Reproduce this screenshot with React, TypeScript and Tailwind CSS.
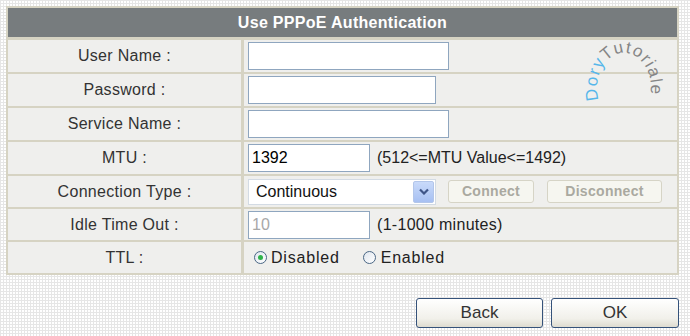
import clsx from "clsx";
import React, { FunctionComponent, ReactNode } from "react";

const font = "font-['Liberation_Sans',Arial,sans-serif]";

type RowProps = { label: string; h: string; children: ReactNode };

const Row: FunctionComponent<RowProps> = ({ label, h, children }) => {
  return (
    <div className={clsx("flex gap-[3px]", h)}>
      <div className="w-[233px] flex items-center justify-center bg-[#efefed] text-[16px] text-[#333] tracking-[0.3px]">
        {label}
      </div>
      <div className="flex-1 flex items-center pl-[4px] bg-[#efefed]">
        {children}
      </div>
    </div>
  );
};

const TextBox: FunctionComponent<{ w: string; value?: string; muted?: boolean }> = ({
  w,
  value = "",
  muted,
}) => (
  <input
    readOnly
    value={value}
    className={clsx(
      "h-[28px] border border-[#8fa6bf] bg-white px-[3px] text-[16px] outline-none",
      w,
      muted ? "text-[#a8a8a8]" : "text-black"
    )}
  />
);

const Radio: FunctionComponent<{ checked?: boolean }> = ({ checked }) => (
  <span className="w-[13px] h-[13px] rounded-full border border-[#4a6785] bg-[linear-gradient(135deg,#dfe6ee,#ffffff)] flex items-center justify-center">
    {checked && <span className="w-[5px] h-[5px] rounded-full bg-[#2fb34a]" />}
  </span>
);

const GrayButton: FunctionComponent<{ w: string; children: ReactNode; className?: string }> = ({
  w,
  children,
  className,
}) => (
  <div
    className={clsx(
      "h-[23px] flex items-center justify-center rounded-[3px] border border-[#d6d4c6] bg-[#f6f6f0] text-[14px] font-bold text-[#aaa9a0] tracking-[0.3px]",
      w,
      className
    )}
  >
    {children}
  </div>
);

const BigButton: FunctionComponent<{ w: string; children: ReactNode }> = ({ w, children }) => (
  <button
    className={clsx(
      "h-[30px] rounded-[3px] border border-[#35527a] bg-[linear-gradient(#ffffff,#f1f0ea_70%,#dedbd0)] text-[17px] text-[#333]",
      w
    )}
  >
    {children}
  </button>
);

export default function App() {
  return (
    <div
      className={clsx(
        font,
        "relative w-[690px] h-[336px] pt-[6px] pl-[6px] bg-white bg-[linear-gradient(90deg,#e6e6e6_1px,transparent_1px),linear-gradient(#e6e6e6_1px,transparent_1px)] bg-[length:3px_3px]"
      )}
    >
      <div className="w-[673px] bg-[#d6d3c3] p-[2px] flex flex-col gap-[2px]">
        <div className="h-[29px] mb-[1px] bg-[#777c7e] flex items-center justify-center text-white font-bold text-[16px] tracking-[0.3px]">
          Use PPPoE Authentication
        </div>
        <Row label="User Name :" h="h-[32px]">
          <TextBox w="w-[201px]" />
        </Row>
        <Row label="Password :" h="h-[32px]">
          <TextBox w="w-[188px]" />
        </Row>
        <Row label="Service Name :" h="h-[32px]">
          <TextBox w="w-[201px]" />
        </Row>
        <Row label="MTU :" h="h-[32px]">
          <TextBox w="w-[122px]" value="1392" />
          <span className="ml-[7px] text-[16px] text-[#222]">(512&lt;=MTU Value&lt;=1492)</span>
        </Row>
        <Row label="Connection Type :" h="h-[31px]">
          <div className="w-[188px] h-[26px] border border-[#d3dbe4] bg-white flex items-center justify-between pl-[7px] pr-[1px] text-[16px] text-[#111]">
            <span>Continuous</span>
            <span className="w-[21px] h-[22px] rounded-[2px] border border-[#b3c6ea] bg-[linear-gradient(#c9dafa,#a7c0f2)] flex items-center justify-center">
              <svg width="10" height="7" viewBox="0 0 10 7">
                <path d="M1 1.5 L5 5.5 L9 1.5" fill="none" stroke="#3f5588" strokeWidth="2.2" />
              </svg>
            </span>
          </div>
          <GrayButton w="w-[86px]" className="ml-[12px]">
            Connect
          </GrayButton>
          <GrayButton w="w-[115px]" className="ml-[13px]">
            Disconnect
          </GrayButton>
        </Row>
        <Row label="Idle Time Out :" h="h-[31px]">
          <TextBox w="w-[122px]" value="10" muted />
          <span className="ml-[7px] text-[16px] text-[#222] tracking-[0.3px]">(1-1000 minutes)</span>
        </Row>
        <Row label="TTL :" h="h-[31px]">
          <div className="ml-[6px] flex items-center text-[16px] text-[#222] tracking-[0.8px]">
            <Radio checked />
            <span className="ml-[4px]">Disabled</span>
            <span className="ml-[23px]">
              <Radio />
            </span>
            <span className="ml-[5px]">Enabled</span>
          </div>
        </Row>
      </div>

      <div className="mt-[23px] flex justify-end gap-[8px] pr-[11px]">
        <BigButton w="w-[127px]">Back</BigButton>
        <BigButton w="w-[128px]">OK</BigButton>
      </div>

      {/* watermark laid over the table */}
      <svg
        className="absolute left-[570px] top-[20px] pointer-events-none"
        width="110"
        height="100"
        viewBox="0 0 110 100"
      >
        <defs>
          <path id="wm" d="M28.6 80 A27 35 0 1 1 78.6 82" fill="none" />
        </defs>
        <text fontSize="17" fontFamily="Liberation Sans, Arial, sans-serif">
          <textPath href="#wm" textLength="116" lengthAdjust="spacing">
            <tspan fill="#55b6ea">Dory</tspan>
            <tspan fill="#858585">Tutoriale</tspan>
          </textPath>
        </text>
      </svg>
    </div>
  );
}
